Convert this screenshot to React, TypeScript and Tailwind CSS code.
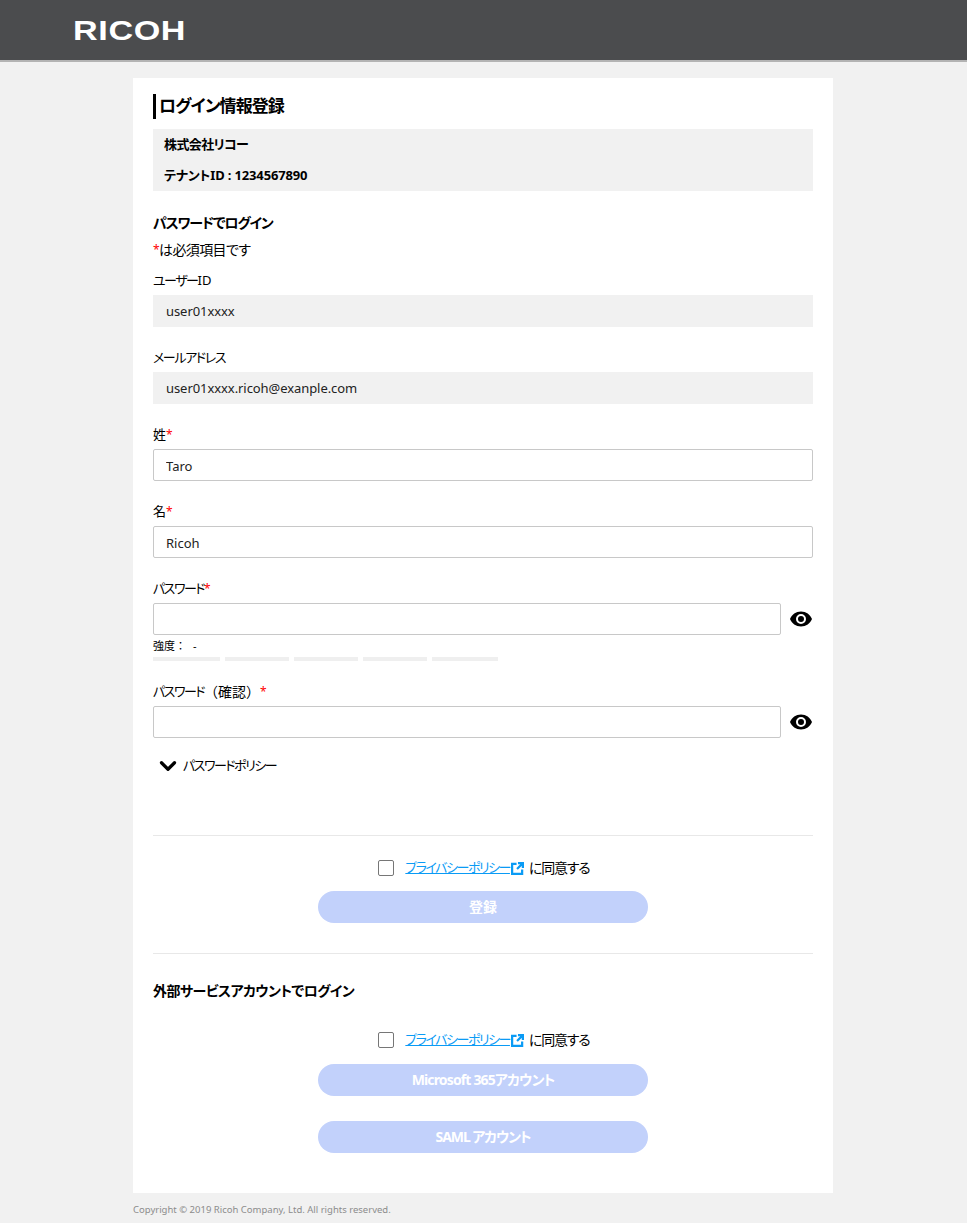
import type { ReactNode } from 'react'
import { ChevronDown } from 'lucide-react'

const font = '[font-family:"Noto_Sans","Noto_Sans_CJK_JP",sans-serif] [font-feature-settings:"palt"]'

function Req() {
  return <span className="text-[12px] leading-none text-[#f00]">*</span>
}

function FieldLabel({ children }: { children: ReactNode }) {
  return <div className="flex h-[27px] items-center pb-[1px] text-[13px] text-black">{children}</div>
}

function ReadonlyField({ label, value }: { label: ReactNode; value: string }) {
  return (
    <div className="mb-[18px]">
      <FieldLabel>{label}</FieldLabel>
      <div className="flex h-8 items-center bg-[#f1f1f1] px-[13px] pt-[2px] text-[13px] tracking-[-0.07px] text-[#222]">{value}</div>
    </div>
  )
}

function TextField({ label, value }: { label: string; value: string }) {
  return (
    <div className="mb-[18px]">
      <FieldLabel>
        {label}
        <Req />
      </FieldLabel>
      <input
        readOnly
        value={value}
        className="block h-8 w-full rounded-[2px] border border-[#c8c8c8] bg-white px-[12px] pt-[1px] text-[13px] text-[#222] outline-none"
      />
    </div>
  )
}

function PasswordInput() {
  return (
    <div className="flex h-8 items-center">
      <input
        readOnly
        type="password"
        className="block h-8 w-[628px] rounded-[2px] border border-[#c8c8c8] bg-white outline-none"
      />
      <EyeIcon />
    </div>
  )
}

function EyeIcon() {
  return (
    <svg viewBox="0 0 24 24" className="ml-[8px] h-[24px] w-[24px]" fill="#000">
      <path d="M12 4.500C7 4.500 2.700 7.600 1 12c1.700 4.400 6 7.500 11 7.500s9.300-3.100 11-7.500c-1.700-4.400-6-7.500-11-7.500zM12 17a5 5 0 1 1 0-10 5 5 0 0 1 0 10zm0-8a3 3 0 1 0 0 6 3 3 0 0 0 0-6z" />
    </svg>
  )
}

function ExternalIcon() {
  return (
    <svg viewBox="0 0 14 14" className="mx-[1px] h-[13px] w-[13px] shrink-0" fill="none" stroke="#0a9bf5" strokeWidth="2.4">
      <path d="M6 2H1.200v10.800H12V8" />
      <path d="M7.500 1.200h5.300v5.300M12.800 1.200 6.500 7.500" />
    </svg>
  )
}

function Agreement() {
  return (
    <div className="flex h-5 items-center justify-center pl-[2px] text-black">
      <span className="mr-[11px] block h-4 w-4 rounded-[2px] border border-[#767676] bg-white" />
      <a className="text-[13px] tracking-[-1.5px] text-[#0a9bf5] underline">プライバシーポリシー</a>
      <ExternalIcon />
      <span className="ml-[4px] text-sm tracking-[-1.2px]">に同意する</span>
    </div>
  )
}

function DisabledButton({ children, tracking }: { children: string; tracking: string }) {
  return (
    <div className={`mx-auto flex h-8 w-[330px] items-center justify-center rounded-full bg-[#c2d1fb] pb-[1px] text-sm font-bold text-white ${tracking}`}>
      {children}
    </div>
  )
}

export default function App() {
  return (
    <div className={`${font} min-h-[1223px] overflow-hidden bg-[#f1f1f1]`}>
      <header className="h-[62px] border-b-2 border-[#b3b3b3] bg-[#4b4c4e] pl-[73px]">
        <div className="w-fit origin-left scale-x-[1.22] pt-[14px] text-[28px] leading-[33px] font-bold tracking-[0.5px] text-white [font-family:'Liberation_Sans',sans-serif]">
          RICOH
        </div>
      </header>

      <div className="w-[966px]">
        <main className="mx-auto mt-4 h-[1115px] w-[700px] bg-white px-5 pt-4">
          <h1 className="flex h-[25px] items-center border-l-[3px] border-black pb-[1px] pl-[3px] text-[17px] font-bold tracking-[-0.9px] text-black">
            ログイン情報登録
          </h1>
          <div className="mt-[10px] h-[62px] bg-[#f1f1f1] px-[11px] text-[13px] font-bold text-black">
            <div className="flex h-[31px] items-center tracking-[-0.6px]">株式会社リコー</div>
            <div className="flex h-[31px] items-center tracking-[-0.15px]">テナントID : 1234567890</div>
          </div>

          <h2 className="mt-[20px] flex h-6 items-center text-sm font-bold tracking-[-1.2px] text-black">パスワードでログイン</h2>
          <p className="mt-[3px] flex h-6 items-center text-sm tracking-[-0.6px] text-black">
            <Req />は必須項目です
          </p>

          <div className="mt-[6px]">
            <ReadonlyField
              label={
                <>
                  <span className="tracking-[-1.5px]">ユーザー</span>
                  <span>ID</span>
                </>
              }
              value="user01xxxx"
            />
            <ReadonlyField label={<span className="tracking-[-1.4px]">メールアドレス</span>} value="user01xxxx.ricoh@exanple.com" />
            <TextField label="姓" value="Taro" />
            <TextField label="名" value="Ricoh" />
          </div>

          <FieldLabel>
            <span className="tracking-[-1.5px]">パスワード</span>
            <Req />
          </FieldLabel>
          <PasswordInput />
          <div className="flex h-[22px] items-center text-[11px] text-black [font-feature-settings:normal]">
            強度：<span className="ml-[7px]">-</span>
          </div>
          <div className="flex h-[4px] gap-[5px]">
            <div className="w-[67px] bg-[#efefef]" />
            <div className="w-[64px] bg-[#efefef]" />
            <div className="w-[64px] bg-[#efefef]" />
            <div className="w-[64px] bg-[#efefef]" />
            <div className="w-[66px] bg-[#efefef]" />
          </div>

          <div className="mt-[18px]">
            <FieldLabel>
              <span className="tracking-[-1.5px]">パスワード</span>
              <span className="text-sm [font-feature-settings:normal]">（確認）</span>
              <Req />
            </FieldLabel>
          </div>
          <PasswordInput />

          <div className="mt-[16px] flex h-6 items-center pl-[2px] text-[13px] tracking-[-1.5px] text-black">
            <ChevronDown size={26} strokeWidth={3} className="mr-[2px]" />
            パスワードポリシー
          </div>

          <hr className="mt-[57px] border-t border-[#e8e8e8]" />
          <div className="mt-[22px]"><Agreement /></div>
          <div className="mt-[13px]"><DisabledButton tracking="tracking-normal">登録</DisabledButton></div>
          <hr className="mt-[30px] border-t border-[#e8e8e8]" />

          <h2 className="mt-[25px] flex h-6 items-center text-sm font-bold tracking-[-0.56px] text-black">外部サービスアカウントでログイン</h2>
          <div className="mt-[27px]"><Agreement /></div>
          <div className="mt-[14px]"><DisabledButton tracking="tracking-[-0.85px]">Microsoft 365アカウント</DisabledButton></div>
          <div className="mt-[25px]"><DisabledButton tracking="tracking-[-1.1px]">SAML アカウント</DisabledButton></div>
        </main>

        <footer className="mx-auto flex h-[34px] w-[700px] items-center text-[9.5px] text-[#8c8c8c]">
          Copyright © 2019 Ricoh Company, Ltd. All rights reserved.
        </footer>
      </div>
    </div>
  )
}
